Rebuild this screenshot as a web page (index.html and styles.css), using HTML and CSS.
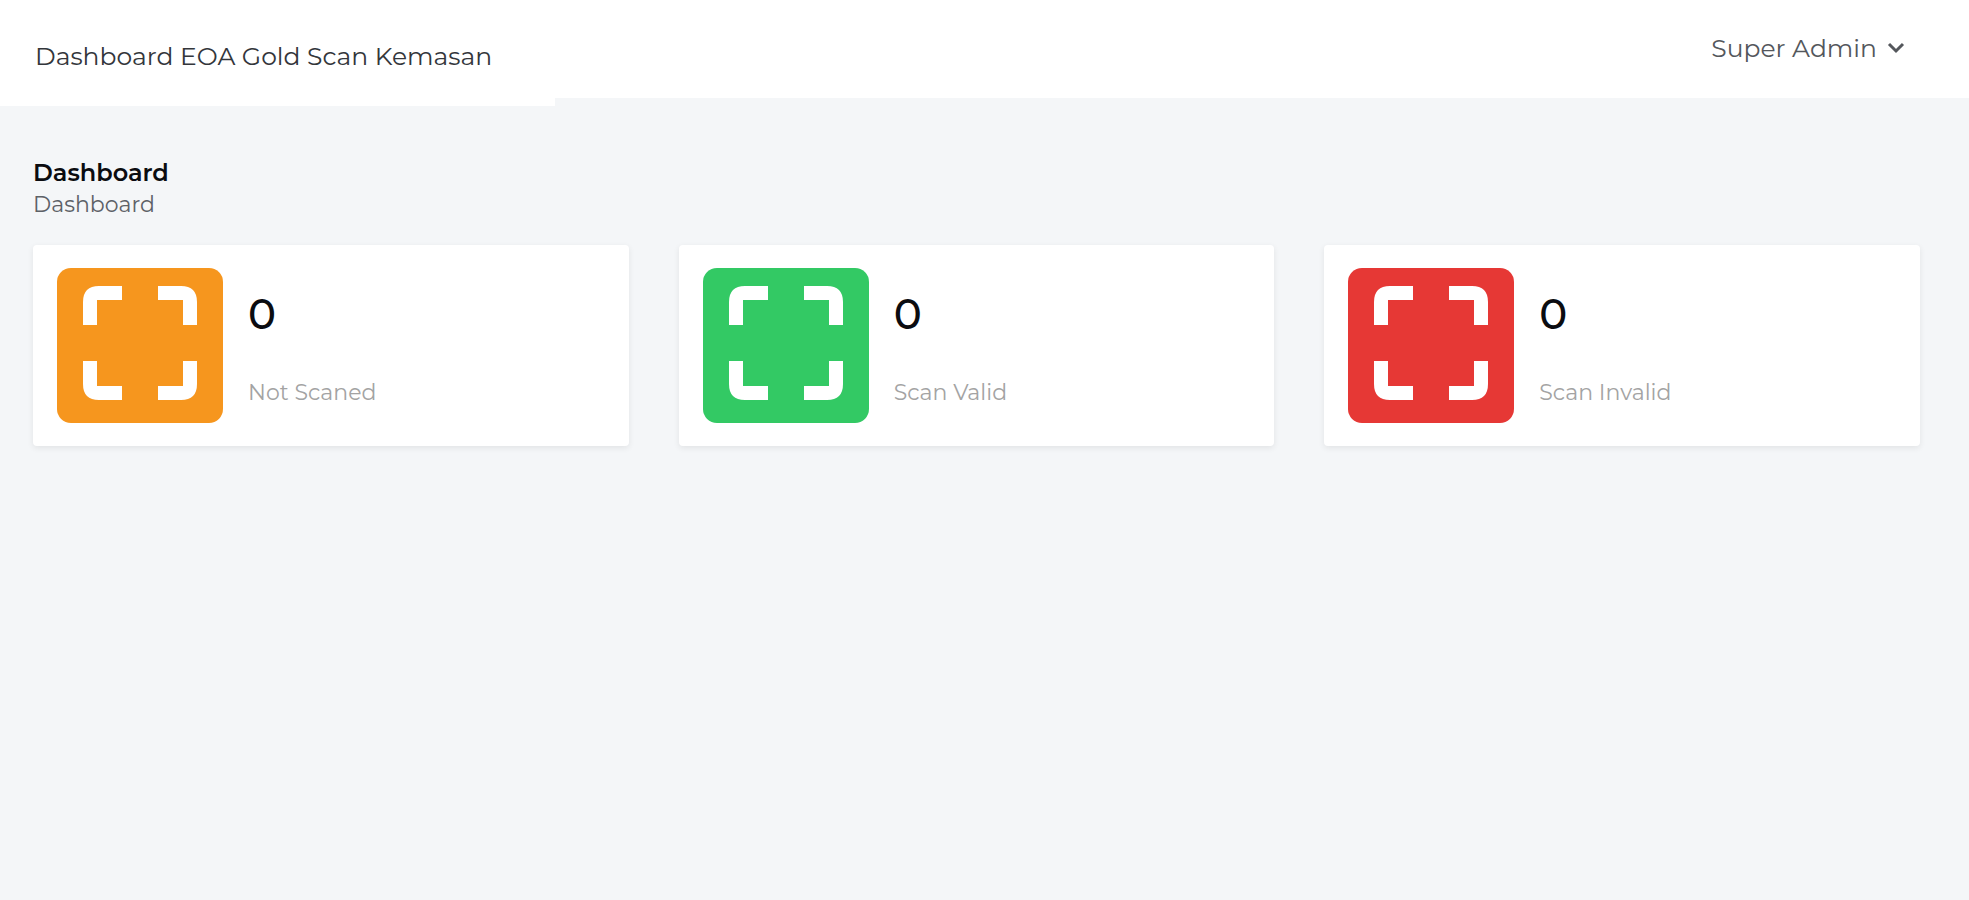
FILE: index.html
```
<!DOCTYPE html>
<html lang="id">
<head>
<meta charset="UTF-8">
<meta name="viewport" content="width=device-width, initial-scale=1.0">
<title>Dashboard EOA Gold Scan Kemasan</title>
<link rel="stylesheet" href="styles.css">
</head>
<body>
<header class="topbar">
    <div class="brand">Dashboard EOA Gold Scan Kemasan</div>
    <button type="button" class="user-menu">
        Super Admin
        <svg class="chevron" viewBox="0 0 18 12" aria-hidden="true">
            <path d="M2 2l7 7 7-7"/>
        </svg>
    </button>
</header>

<main class="content">
    <h1>Dashboard</h1>
    <p class="breadcrumb">Dashboard</p>

    <div class="cards">
        <div class="card">
            <div class="card-icon orange">
                <svg viewBox="0 0 114 114" aria-hidden="true">
                    <path d="M0 39V16Q0 0 16 0H39V14H14V39ZM75 0H98Q114 0 114 16V39H100V14H75ZM114 75V98Q114 114 98 114H75V100H100V75ZM39 114H16Q0 114 0 98V75H14V100H39Z"/>
                </svg>
            </div>
            <div class="card-info">
                <div class="count">0</div>
                <div class="label">Not Scaned</div>
            </div>
        </div>

        <div class="card">
            <div class="card-icon green">
                <svg viewBox="0 0 114 114" aria-hidden="true">
                    <path d="M0 39V16Q0 0 16 0H39V14H14V39ZM75 0H98Q114 0 114 16V39H100V14H75ZM114 75V98Q114 114 98 114H75V100H100V75ZM39 114H16Q0 114 0 98V75H14V100H39Z"/>
                </svg>
            </div>
            <div class="card-info">
                <div class="count">0</div>
                <div class="label">Scan Valid</div>
            </div>
        </div>

        <div class="card">
            <div class="card-icon red">
                <svg viewBox="0 0 114 114" aria-hidden="true">
                    <path d="M0 39V16Q0 0 16 0H39V14H14V39ZM75 0H98Q114 0 114 16V39H100V14H75ZM114 75V98Q114 114 98 114H75V100H100V75ZM39 114H16Q0 114 0 98V75H14V100H39Z"/>
                </svg>
            </div>
            <div class="card-info">
                <div class="count">0</div>
                <div class="label">Scan Invalid</div>
            </div>
        </div>
    </div>
</main>
</body>
</html>
```
FILE: styles.css
```
* {
    box-sizing: border-box;
}

body {
    margin: 0;
    background-color: #f4f6f8;
    color: #0b0c10;
    font-family: Montserrat, Inter, sans-serif;
}

.topbar {
    display: flex;
    justify-content: space-between;
    align-items: flex-start;
    height: 98px;
    background-color: #fff;
}

/* The brand block is a little taller than the bar */
.brand {
    width: 555px;
    height: 106px;
    padding: 40px 0 0 35px;
    background-color: #fff;
    color: #33363b;
    font-size: 25px;
    line-height: 32px;
}

.user-menu {
    display: flex;
    align-items: center;
    gap: 10px;
    margin: 0;
    padding: 32px 64px 0 0;
    border: none;
    background: none;
    color: #54575c;
    font-family: inherit;
    font-size: 25px;
    line-height: 32px;
    cursor: pointer;
}

.chevron {
    width: 18px;
    height: 12px;
    fill: none;
    stroke: #54575c;
    stroke-width: 3;
}

.content {
    padding: 59px 49px 40px 33px;
}

h1 {
    margin: 0;
    font-size: 24px;
    font-weight: 600;
    line-height: 32px;
}

.breadcrumb {
    margin: 0 0 24px;
    color: #5d6167;
    font-size: 22px;
    line-height: 32px;
}

.cards {
    display: grid;
    grid-template-columns: repeat(3, 1fr);
    gap: 50px;
}

.card {
    display: flex;
    gap: 25px;
    padding: 23px 24px;
    background-color: #fff;
    border-radius: 4px;
    box-shadow: 0 2px 6px rgba(0, 0, 0, 0.08);
}

.card-icon {
    display: flex;
    justify-content: center;
    width: 166px;
    height: 155px;
    padding-top: 18px;
    border-radius: 14px;
}

.card-icon svg {
    width: 114px;
    height: 114px;
    fill: #fff;
}

.orange {
    background-color: #f6961e;
}

.green {
    background-color: #33c964;
}

.red {
    background-color: #e63835;
}

.card-info {
    display: flex;
    flex-direction: column;
    justify-content: space-between;
    padding: 20px 0 14px;
}

.count {
    font-size: 42px;
    font-weight: 500;
    line-height: 52px;
}

.label {
    color: #a3a3a3;
    font-size: 22px;
    line-height: 32px;
}
```
